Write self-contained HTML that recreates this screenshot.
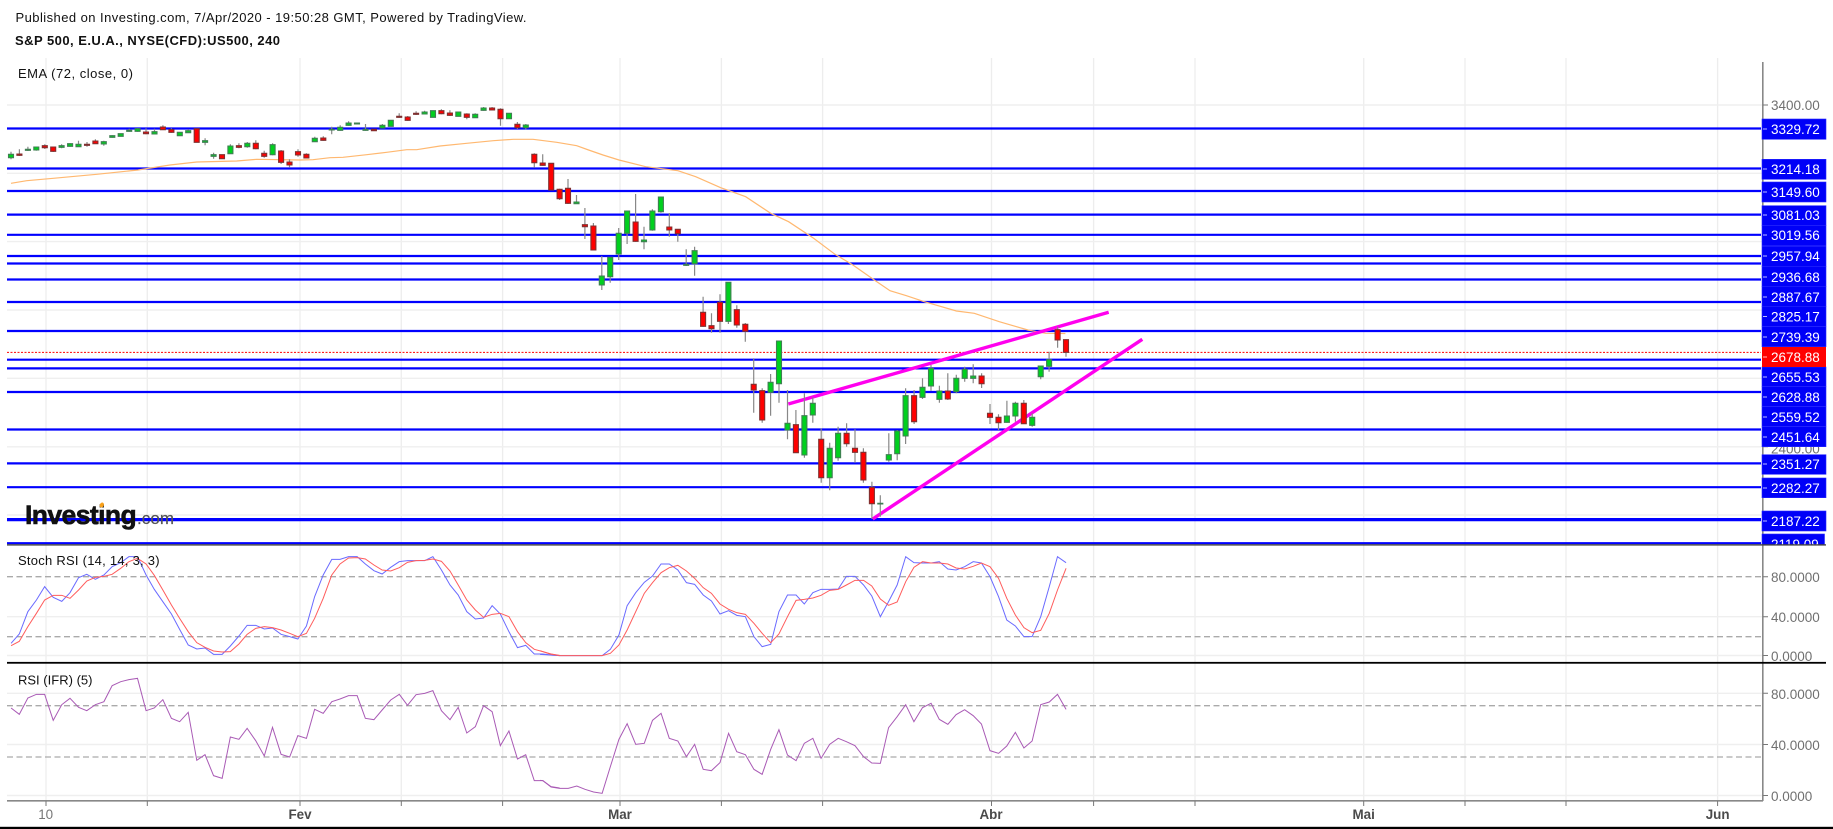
<!DOCTYPE html>
<html lang="pt">
<head>
<meta charset="utf-8">
<title>S&amp;P 500 chart</title>
<style>
html,body{margin:0;padding:0;background:#fff;width:1833px;height:829px;overflow:hidden}
svg{display:block;filter:blur(.3px)}
text{font-family:"Liberation Sans",sans-serif}
.ax{font-size:13.5px;fill:#707070}
.pl{font-size:13.5px;fill:#fff}
.hd{font-size:13px;fill:#111}
.tb{font-size:13.4px;font-weight:bold;fill:#4a4a4a;text-anchor:middle}
</style>
</head>
<body>
<svg xmlns="http://www.w3.org/2000/svg" width="1833" height="829" viewBox="0 0 1833 829">
<defs>
<clipPath id="mainclip"><rect x="0" y="50" width="1833" height="494.5"/></clipPath>
<clipPath id="botclip"><rect x="1764" y="780" width="69" height="21"/></clipPath>
</defs>
<rect width="1833" height="829" fill="#fff"/>

<!-- grid -->
<path fill="none" stroke="#ededed" stroke-width="1.3" d="M46 58V800M147.3 58V800M300 58V800M401.3 58V800M502.6 58V800M620 58V800M721.4 58V800M822.6 58V800M991.5 58V800M1093.6 58V800M1195 58V800M1363.7 58V800M1465 58V800M1566 58V800M1717.6 58V800"/>
<path fill="none" stroke="#efefef" stroke-width="1.4" d="M7 105H1762M7 173.3H1762M7 241.6H1762M7 310H1762M7 378.3H1762M7 446.8H1762M7 515H1762M7 616.7H1762M7 655.5H1762M7 693.3H1762M7 744.5H1762M7 795.5H1762"/>

<!-- horizontal levels -->
<path fill="none" stroke="#0000ff" stroke-width="2.2" d="M7 128.5H1761M7 168.5H1761M7 191H1761M7 214.6H1761M7 234.8H1761M7 256H1761M7 263.5H1761M7 279.5H1761M7 302H1761M7 331H1761M7 359.7H1761M7 368.4H1761M7 392H1761M7 429.5H1761M7 463.4H1761M7 487.2H1761M7 543.2H1761"/>
<path fill="none" stroke="#0000ff" stroke-width="3.2" d="M7 519.6H1761"/>
<path fill="none" stroke="#f00" stroke-width="1" stroke-dasharray="2 1.5" d="M7 352.4H1761"/>

<!-- EMA -->
<polyline fill="none" stroke="#ffb870" stroke-width="1.2" points="11,183.3 26.7,180.7 53.3,178.3 96.7,174.3 138,170 170,165 196.7,162 236.7,161 256.7,159.3 300,160 313,159.7 330,157.7 343,157.3 366.7,154.7 386.7,152.3 406.7,149.7 416.7,149.7 440,146 466.7,143.3 493.3,140.7 513.3,139.3 533,139.3 556.7,142.3 576.7,145.7 588.6,150 603,155 619,160 645.7,166.7 677.9,170.7 695.7,176.7 720.7,187.7 745.7,196.7 770.7,213.3 788.6,221.7 813.6,238.3 835,254.3 852.9,265 874.3,280 890,290.7 906.4,295.7 924.3,301.7 956.4,311 974.3,313.3 999.3,321.7 1027.9,330 1045.7,333.3 1065.4,333.5"/>

<!-- trend lines -->
<path fill="none" stroke="#ff00ee" stroke-width="3.4" d="M788.3 404L1108.7 312.3M872.7 519L1142.3 339.3"/>

<!-- wicks -->
<path fill="none" stroke="#888" stroke-width="1.2" d="M11 151.7V159.3M19.4 149.3V156M27.9 146.7V151M36.3 147V150.7M44.8 144.3V149M53.2 146.7V152M61.6 144.3V148.3M70.1 143.3V146.7M78.5 140.7V147M87 142V146.7M95.4 139.3V144M103.8 140.7V145.7M112.3 135.3V137.7M129.2 128.7V131.7M137.6 128.3V131.7M146 128.3V134.3M154.5 128.7V134.3M162.9 125.3V130M171.4 128.3V132.7M188.2 129.3V133M205.1 138.3V145.3M213.6 152.7V158.7M230.4 144.3V154M238.9 143.3V148.3M247.3 142V147.7M255.8 140.3V149.3M264.2 150.7V157.7M272.6 143.3V155.3M281.1 150V164M289.5 159.3V167.3M298 149.3V156.7M306.4 153.3V158.3M314.8 136.7V142M323.3 136.3V140.7M331.7 126.7V134.3M340.2 125.3V130.7M348.6 121.3V125.7M365.5 124V130.7M382.4 124V128.3M399.2 113.3V117.7M407.7 116V120.7M416.1 111.3V115M424.6 110.7V114.3M441.4 109.3V114.3M449.9 110.3V116M466.8 113.3V119.3M475.2 113.3V118M483.6 107V110.7M492.1 107V110.3M500.5 108.3V125.7M517.4 122V129M525.8 124V129.3M534.3 153.3V167.7M542.7 154.3V165.7M559.6 188.7V200M568 179V204M576.5 195V204M584.9 208V239M593.4 223V250.5M601.8 256V290M610.2 257V282.7M618.7 228V260M627.1 211V244M635.6 194V241.7M644 226.7V249.3M652.4 209.3V230.7M660.9 196.7V212.7M669.3 213V236.7M677.8 229V241.7M686.2 249.3V266M694.6 246.7V275.7M703.1 296.7V326.7M711.5 313.3V332.7M720 294.3V332.7M728.4 282V324M736.8 305.3V327.7M745.3 323V341.7M753.7 358.3V412.7M762.2 388.3V422.7M770.6 374V415.7M779 341V402.7M787.5 390V439.3M795.9 410V452.7M804.4 393.3V457.7M812.8 397.3V422.7M821.2 428.3V482.7M829.7 442.7V490.3M838.1 426.7V460.7M846.6 423.3V446.7M855 429.3V462.7M863.4 448.3V482.7M871.9 481.7V519M880.3 495.3V516.7M888.8 433.3V461.7M897.2 430V460.3M905.6 388.3V444M914.1 390V424M922.5 378.3V399M931 365V390.7M939.4 385.7V402.7M947.8 373.3V400M956.3 374.7V393.3M964.7 366.7V381.7M973.2 364.3V383.3M981.6 373.3V388M990 404V424M998.5 414.3V430M1006.9 400.7V422.7M1015.4 401.7V421.7M1023.8 400V424M1032.2 413.3V426.7M1040.7 366V379.3M1049.1 351.7V371.7M1057.6 326.7V347.7M1066 339.3V356.7"/>

<!-- green bodies -->
<path fill="#00d01e" stroke="#3f7f52" stroke-width="1.1" d="M8.5 154.3h5v3.4h-5zM25.4 149.3h5v1h-5zM33.8 147h5v3h-5zM59.1 145.7h5v1.6h-5zM67.6 143.7h5v2.6h-5zM76 144.3h5v2.4h-5zM101.3 141.7h5v2.3h-5zM109.8 135.7h5v1.6h-5zM118.2 133.7h5v2.6h-5zM126.7 130.3h5v1h-5zM135.1 128.7h5v2.6h-5zM152 131.7h5v2.3h-5zM177.3 132.3h5v3.4h-5zM185.7 130.7h5v2h-5zM202.6 140.7h5v1.6h-5zM211.1 154.7h5v1.6h-5zM227.9 146h5v7.7h-5zM244.8 143.3h5v3.4h-5zM270.1 144.7h5v10h-5zM312.3 138.3h5v3.4h-5zM329.2 129.3h5v.7h-5zM337.7 127.3h5v3h-5zM346.1 123h5v2.3h-5zM354.5 123h5v1h-5zM363 129.3h5v1h-5zM379.9 125.3h5v2.7h-5zM388.3 120.3h5v6h-5zM422.1 112h5v2h-5zM430.5 110.7h5v6.6h-5zM455.8 112h5v4.3h-5zM472.7 114.3h5v3.4h-5zM481.1 108h5v2.3h-5zM506.5 113.3h5v5.4h-5zM523.3 125h5v2.7h-5zM574 202h5v1.7h-5zM599.3 276h5v9h-5zM607.7 257.3h5v19.4h-5zM616.2 233.3h5v20.7h-5zM624.6 211h5v22.3h-5zM641.5 240h5v1.7h-5zM649.9 211h5v19h-5zM658.4 197h5v14.7h-5zM683.7 264.3h5v1h-5zM692.1 250.7h5v13h-5zM725.9 282.3h5v39h-5zM768.1 382.3h5v10h-5zM776.5 341h5v42.7h-5zM785 423.3h5v6.7h-5zM801.9 415.7h5v39.3h-5zM810.3 403.3h5v11.7h-5zM827.2 448.3h5v29.4h-5zM835.6 433.3h5v24.4h-5zM877.8 503.3h5v.7h-5zM886.3 454.7h5v5.3h-5zM894.7 431h5v22.7h-5zM903.1 395.7h5v40.3h-5zM920 387.3h5v10h-5zM928.5 368.3h5v17.7h-5zM936.9 391h5v8.3h-5zM953.8 378.3h5v13.4h-5zM962.2 369.3h5v9h-5zM970.7 376h5v2.3h-5zM1004.4 416h5v6.3h-5zM1012.9 403.3h5v12.7h-5zM1029.7 417.3h5v8h-5zM1038.2 366h5v10.7h-5zM1046.6 359.7h5v6.6h-5z"/>

<!-- red bodies -->
<path fill="#ff0000" stroke="#7f3030" stroke-width="1.1" d="M16.9 154h5v1.3h-5zM42.3 145.7h5v2h-5zM50.7 147h5v4.3h-5zM84.5 144.3h5v1h-5zM92.9 141h5v2.7h-5zM143.5 132h5v1.7h-5zM160.4 127h5v2.7h-5zM168.9 129.7h5v2.6h-5zM194.2 128.7h5v13.6h-5zM219.5 154.7h5v4h-5zM236.4 145.7h5v1.6h-5zM253.3 143.3h5v5.4h-5zM261.7 153.3h5v3h-5zM278.6 151h5v11.3h-5zM287 162h5v3h-5zM295.5 151.7h5v3.3h-5zM303.9 154.3h5v3.7h-5zM320.8 138h5v2.3h-5zM371.4 129.3h5v1.4h-5zM396.7 116.3h5v1h-5zM405.2 117h5v3.3h-5zM413.6 113.3h5v1h-5zM438.9 110.7h5v3h-5zM447.4 113h5v2.3h-5zM464.3 114h5v3.3h-5zM489.6 108h5v2h-5zM498 109.3h5v9.4h-5zM514.9 124.3h5v3.4h-5zM531.8 154.3h5v8.4h-5zM540.2 163h5v2.3h-5zM548.7 163.3h5v26.7h-5zM557.1 189.3h5v9.4h-5zM565.5 188.3h5v15h-5zM582.4 224.7h5v2h-5zM590.9 226h5v24h-5zM633.1 222h5v19.3h-5zM666.8 227h5v3h-5zM675.3 229.3h5v4.4h-5zM700.6 312.3h5v14h-5zM709 325.7h5v3h-5zM717.5 302.3h5v19h-5zM734.3 309.7h5v15.3h-5zM742.8 324.3h5v7h-5zM751.2 384.3h5v5.7h-5zM759.7 390.7h5v29.3h-5zM793.4 424.7h5v28h-5zM818.7 439.3h5v38.4h-5zM844.1 433.3h5v10.4h-5zM852.5 448.3h5v4h-5zM860.9 452.3h5v27.7h-5zM869.4 487.3h5v16.4h-5zM911.6 395.7h5v26h-5zM945.3 391h5v8h-5zM979.1 376h5v7.7h-5zM987.5 413.3h5v4h-5zM996 417.3h5v5.4h-5zM1021.3 403.3h5v20.4h-5zM1055.1 329.7h5v10.3h-5zM1063.5 339.7h5v12.6h-5z"/>

<!-- dashed indicator levels -->
<path fill="none" stroke="#aaa" stroke-width="1.3" stroke-dasharray="6 3.5" d="M7 576.7H1762M7 636.7H1762M7 705.7H1762M7 757H1762"/>

<!-- Stoch RSI lines -->
<g transform="translate(0 490) scale(.35714 .33333)" fill="none" stroke-width="1" >
<polyline vector-effect="non-scaling-stroke" stroke="#6a6aff" points="31,460 54,432 78,365 102,330 125,290 149,322 173,334 196,308 220,263 243,253 267,268 291,255 314,230 338,218 361,200 385,200 409,255 432,298 456,335 480,372 503,418 527,465 551,477 574,474 598,493 622,493 645,468 669,438 692,406 716,406 740,417 763,414 787,433 811,440 834,447 858,408 881,320 905,255 929,208 952,208 976,200 1000,200 1023,222 1047,242 1070,252 1094,232 1118,215 1141,212 1165,212 1189,212 1212,200 1236,240 1260,285 1283,315 1307,365 1331,387 1354,384 1378,347 1401,372 1425,425 1449,473 1472,466 1496,492 1520,492 1543,495 1567,497"/>
<polyline vector-effect="non-scaling-stroke" stroke="#ff5c5c" points="31,467 54,454 78,410 102,370 125,330 149,316 173,316 196,325 220,300 243,273 267,262 291,259 314,253 338,235 361,215 385,205 409,222 432,256 456,300 480,345 503,385 527,425 551,458 574,472 598,483 622,486 645,485 669,462 692,433 716,415 740,410 763,413 787,420 811,430 834,440 858,430 881,385 905,325 929,255 952,222 976,204 1000,203 1023,207 1047,225 1070,240 1094,243 1118,233 1141,217 1165,212 1189,211 1212,207 1236,214 1260,243 1283,285 1307,330 1331,360 1354,382 1378,373 1401,370 1425,380 1449,425 1472,458 1496,478 1520,485 1543,492 1567,496"/>
<polyline vector-effect="non-scaling-stroke" stroke="#a95ab5" points="31,654 54,673 78,624 102,613 125,613 149,691 173,644 196,625 220,652 243,662 267,644 291,635 314,587 338,575 361,569 385,565 409,662 432,654 456,629 480,685 503,695 527,667 551,811 574,794 598,857 622,865 645,741 669,748 692,715 716,752 740,798 763,712 787,793 811,801 834,737 858,745 881,658 905,670 929,635 952,627 976,617 1000,617 1023,685 1047,689 1070,660 1094,630 1118,613 1141,646 1165,614 1189,610 1212,602 1236,662 1260,689 1283,652 1307,729 1331,710 1354,647 1378,665 1401,767 1425,723 1449,807 1472,794 1496,872 1520,872 1543,890 1567,894"/>
</g>
<g transform="translate(540 540) scale(.35714 .33333)" fill="none">
<polyline vector-effect="non-scaling-stroke" stroke="#6a6aff" stroke-width="1" points="0,343 28,345 55,347 174,347 197,328 221,285 244,197 268,158 292,127 315,108 339,72 362,72 386,90 410,128 433,133 457,165 480,183 504,222 528,212 551,226 575,230 599,290 622,320 646,313 669,215 693,165 717,165 740,192 764,158 787,148 811,148 835,147 858,109 882,109 906,135 929,168 953,230 976,185 1000,135 1024,50 1047,68 1071,69 1095,69 1118,65 1142,87 1165,90 1189,80 1213,65 1236,69 1260,110 1284,170 1307,240 1331,258 1355,290 1378,290 1402,230 1426,140 1449,50 1473,68"/>
<polyline vector-effect="non-scaling-stroke" stroke="#ff5c5c" stroke-width="1" points="0,332 28,342 55,347 174,347 197,340 221,315 244,270 268,215 292,160 315,128 339,98 362,83 386,76 410,93 433,115 457,143 480,160 504,192 528,208 551,218 575,223 599,250 622,280 646,308 669,282 693,230 717,181 740,178 764,174 787,166 811,151 835,148 858,135 882,121 906,121 929,138 953,177 976,196 1000,186 1024,125 1047,82 1071,65 1095,69 1118,69 1142,72 1165,84 1189,87 1213,79 1236,69 1260,80 1284,115 1307,175 1331,225 1355,263 1378,278 1402,271 1426,220 1449,150 1473,85"/>
<polyline vector-effect="non-scaling-stroke" stroke="#a95ab5" stroke-width="1" points="0,721 8,722 31,741 55,745 79,745 103,738 126,748 150,756 174,760 197,680 221,598 244,551 268,613 292,610 315,541 339,520 362,595 386,603 410,650 433,613 457,688 480,692 504,668 528,580 551,635 575,644 599,688 622,703 646,628 669,569 693,645 717,662 740,610 764,595 787,655 811,613 835,595 858,605 882,617 906,650 929,669 953,670 976,563 1000,530 1024,494 1047,545 1071,503 1095,490 1118,538 1142,553 1165,524 1189,509 1213,527 1236,552 1260,632 1284,640 1307,618 1331,577 1355,624 1378,603 1402,494 1426,486 1449,463 1473,508"/>
</g>

<!-- axes -->
<path fill="none" stroke="#888" stroke-width="1.6" d="M1762.8 62V801M7 800.8H1763"/>
<path fill="none" stroke="#777" stroke-width="1" d="M1763 105H1768M1763 241.6H1768M1763 446.8H1768M1763 576.7H1768M1763 616.7H1768M1763 655.5H1768M1763 693.3H1768M1763 744.5H1768M1763 795.5H1768M46 801V806M147.3 801V806M300 801V806M401.3 801V806M502.6 801V806M620 801V806M721.4 801V806M822.6 801V806M991.5 801V806M1093.6 801V806M1195 801V806M1363.7 801V806M1465 801V806M1566 801V806M1717.6 801V806"/>

<!-- axis labels behind price tags -->
<text class="ax" x="1771" y="110">3400.00</text>
<text class="ax" x="1771" y="247">3000.00</text>
<text class="ax" x="1771" y="453.5">2400.00</text>

<!-- price tags -->
<g clip-path="url(#mainclip)">
<g fill="#0000f8" stroke="#2a2aff" stroke-width=".6">
<rect x="1762" y="119" width="64" height="20.3"/>
<rect x="1762" y="159.3" width="64" height="20"/>
<rect x="1762" y="182" width="64" height="20"/>
<rect x="1762" y="205.7" width="64" height="20"/>
<rect x="1762" y="225.7" width="64" height="20"/>
<rect x="1762" y="246.3" width="64" height="20"/>
<rect x="1762" y="266.3" width="64" height="20"/>
<rect x="1762" y="286.3" width="64" height="20"/>
<rect x="1762" y="306.3" width="64" height="20"/>
<rect x="1762" y="326.5" width="64" height="20.2"/>
<rect x="1762" y="367" width="64" height="19.6"/>
<rect x="1762" y="386.7" width="64" height="19.8"/>
<rect x="1762" y="406.7" width="64" height="19.8"/>
<rect x="1762" y="426.7" width="64" height="20"/>
<rect x="1762" y="454.7" width="64" height="19.6"/>
<rect x="1762" y="478" width="64" height="19.7"/>
<rect x="1762" y="511" width="64" height="20"/>
<rect x="1762" y="534" width="62.5" height="14"/>
</g>
<rect x="1762" y="347" width="64" height="20" fill="#ff0000"/>
<path fill="none" stroke="#bbbbff" stroke-width="1" d="M1763 129H1767M1763 169H1767M1763 192H1767M1763 215H1767M1763 235H1767M1763 256H1767M1763 277H1767M1763 297H1767M1763 316.5H1767M1763 337H1767M1763 377H1767M1763 397H1767M1763 417H1767M1763 437H1767M1763 464H1767M1763 488H1767M1763 521H1767"/>
<path fill="none" stroke="#ffbbbb" stroke-width="1" d="M1763 357H1767"/>
<text class="pl" x="1771" y="134">3329.72</text>
<text class="pl" x="1771" y="174">3214.18</text>
<text class="pl" x="1771" y="197">3149.60</text>
<text class="pl" x="1771" y="220">3081.03</text>
<text class="pl" x="1771" y="240">3019.56</text>
<text class="pl" x="1771" y="261">2957.94</text>
<text class="pl" x="1771" y="282">2936.68</text>
<text class="pl" x="1771" y="302">2887.67</text>
<text class="pl" x="1771" y="321.5">2825.17</text>
<text class="pl" x="1771" y="342">2739.39</text>
<text class="pl" x="1771" y="362">2678.88</text>
<text class="pl" x="1771" y="382">2655.53</text>
<text class="pl" x="1771" y="402">2628.88</text>
<text class="pl" x="1771" y="422">2559.52</text>
<text class="pl" x="1771" y="442">2451.64</text>
<text class="pl" x="1771" y="469">2351.27</text>
<text class="pl" x="1771" y="493">2282.27</text>
<text class="pl" x="1771" y="526">2187.22</text>
<text class="pl" x="1771" y="549">2119.09</text>
</g>

<!-- pane dividers -->
<rect x="7" y="544.2" width="1819" height="1.4" fill="#444"/>
<rect x="7" y="661.9" width="1819" height="1.8" fill="#000"/>
<rect x="0" y="826.8" width="1833" height="2.2" fill="#000"/>

<!-- indicator axis labels -->
<text class="ax" x="1771" y="582">80.0000</text>
<text class="ax" x="1771" y="622">40.0000</text>
<text class="ax" x="1771" y="661">0.0000</text>
<text class="ax" x="1771" y="699">80.0000</text>
<text class="ax" x="1771" y="750">40.0000</text>
<g clip-path="url(#botclip)"><text class="ax" x="1771" y="801">0.0000</text></g>

<!-- time labels -->
<text x="45.7" y="819" font-size="13.4" fill="#777" text-anchor="middle">10</text>
<text class="tb" x="300" y="819">Fev</text>
<text class="tb" x="620" y="819">Mar</text>
<text class="tb" x="991" y="819">Abr</text>
<text class="tb" x="1363.7" y="819">Mai</text>
<text class="tb" x="1717.6" y="819">Jun</text>

<!-- titles -->
<text class="hd" x="15.5" y="22" textLength="511" lengthAdjust="spacing">Published on Investing.com, 7/Apr/2020 - 19:50:28 GMT, Powered by TradingView.</text>
<text class="hd" x="15" y="45" font-weight="bold" fill="#000" textLength="265" lengthAdjust="spacing">S&amp;P 500, E.U.A., NYSE(CFD):US500, 240</text>
<text class="hd" x="18" y="78" textLength="115" lengthAdjust="spacing">EMA (72, close, 0)</text>
<text class="hd" x="18" y="565" textLength="141.6" lengthAdjust="spacing">Stoch RSI (14, 14, 3, 3)</text>
<text class="hd" x="18" y="684.5" textLength="74.5" lengthAdjust="spacing">RSI (IFR) (5)</text>

<!-- logo -->
<text x="25" y="524" font-size="26.5" font-weight="bold" fill="#111" stroke="#111" stroke-width=".6" textLength="111.7" lengthAdjust="spacing">Investing</text>
<text x="137" y="524" font-size="17" fill="#555" stroke="#555" stroke-width=".2" textLength="37" lengthAdjust="spacing">.com</text>
<ellipse cx="101.8" cy="505" rx="2" ry="2.6" fill="#f9a11b" transform="rotate(25 101.8 505)"/>
</svg>
</body>
</html>
